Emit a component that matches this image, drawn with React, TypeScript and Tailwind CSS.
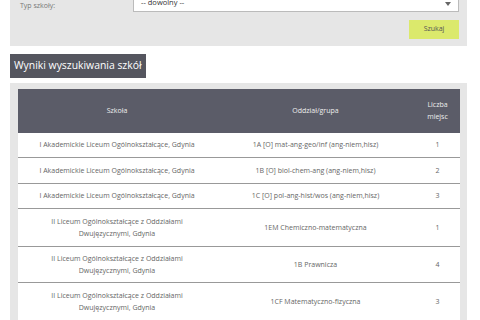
const rows = [
  { school: "I Akademickie Liceum Ogólnokształcące, Gdynia", group: "1A [O] mat-ang-geo/inf (ang-niem,hisz)", seats: "1", h: "h-[25px]" },
  { school: "I Akademickie Liceum Ogólnokształcące, Gdynia", group: "1B [O] biol-chem-ang (ang-niem,hisz)", seats: "2", h: "h-[26px]" },
  { school: "I Akademickie Liceum Ogólnokształcące, Gdynia", group: "1C [O] pol-ang-hist/wos (ang-niem,hisz)", seats: "3", h: "h-[25px]" },
  { school: "II Liceum Ogólnokształcące z Oddziałami Dwujęzycznymi, Gdynia", group: "1EM Chemiczno-matematyczna", seats: "1", h: "h-[38px]" },
  { school: "II Liceum Ogólnokształcące z Oddziałami Dwujęzycznymi, Gdynia", group: "1B Prawnicza", seats: "4", h: "h-[36px]" },
  { school: "II Liceum Ogólnokształcące z Oddziałami Dwujęzycznymi, Gdynia", group: "1CF Matematyczno-fizyczna", seats: "3", h: "h-[38px]" },
];

const App = () => {
  return (
    <div className="w-[480px] h-[320px] overflow-hidden bg-white font-['Open_Sans',sans-serif] text-[#666]">
      <div className="pl-[10px] -mt-[12px]">
        {/* search form */}
        <div className="w-[457px] bg-[#e6e6e6] pt-[1px] pb-[7px]">
          <div className="flex items-start">
            <div className="w-[123px] pl-[10px] pt-[11px] text-[7px] leading-[12px] text-[#777]">Typ szkoły:</div>
            <div className="relative w-[326px] h-[23px] bg-white border border-[#bbb] flex items-end pb-[3px] pl-[7px] text-[7.5px] text-[#333]">
              -- dowolny --
              <span className="absolute right-[7px] bottom-[5px] w-0 h-0 border-l-[3px] border-r-[3px] border-t-[4px] border-l-transparent border-r-transparent border-t-[#666]" />
            </div>
          </div>
          <div className="flex justify-end pr-[8px] mt-[8px]">
            <button className="w-[50px] h-[19px] bg-[#dbe96c] text-[7px] text-[#555]">Szukaj</button>
          </div>
        </div>

        {/* heading */}
        <div className="mt-[8px] inline-flex items-center h-[24px] px-[4px] bg-[#55565f] text-white text-[10.4px]">
          Wyniki wyszukiwania szkół
        </div>

        {/* results */}
        <div className="mt-[5px] w-[457px] bg-[#e6e6e6] pl-[8px] pt-[6px] pb-[20px]">
          <div className="w-[442px] bg-white text-[7px]">
            <div className="flex h-[44px] bg-[#5b5c68] text-[#eee]">
              <div className="w-[198px] flex items-center justify-center">Szkoła</div>
              <div className="w-[199px] flex items-center justify-center">Oddział/grupa</div>
              <div className="w-[45px] flex items-center justify-center text-center leading-[12px]">Liczba<br />miejsc</div>
            </div>
            {rows.map((r, i) => (
              <div key={i} className={`flex ${r.h} border-b border-[#999] leading-[12px]`}>
                <div className="w-[198px] flex items-center justify-center text-center px-[10px]">{r.school}</div>
                <div className="w-[199px] flex items-center justify-center text-center">{r.group}</div>
                <div className="w-[45px] flex items-center justify-center">{r.seats}</div>
              </div>
            ))}
          </div>
        </div>
      </div>
    </div>
  );
};

export default App;
